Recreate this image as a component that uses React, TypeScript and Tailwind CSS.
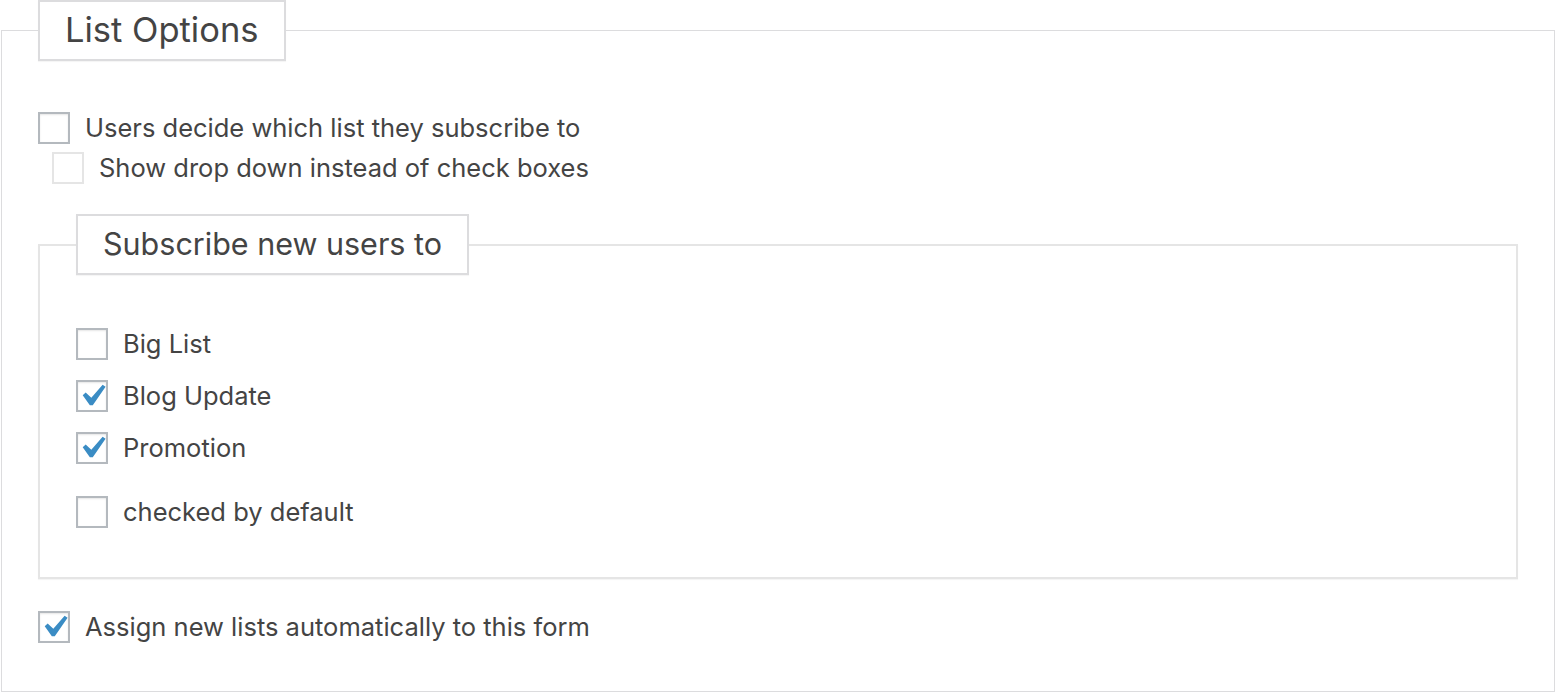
const font = "font-['Inter','Liberation_Sans',sans-serif]";

function Box({ checked = false, faint = false }: { checked?: boolean; faint?: boolean }) {
  return (
    <span
      className={
        'flex h-8 w-8 shrink-0 items-center justify-center bg-white border-2 ' +
        (faint
          ? 'border-[#e5e5e5]'
          : 'border-[#b4b9be] shadow-[inset_0_1px_2px_rgba(0,0,0,0.1)]')
      }
    >
      {checked && (
        <svg viewBox="0 0 20 20" className="h-[44px] w-[44px] shrink-0 fill-[#3a8cc4]">
          <path d="M14.83 4.89l1.34.94-5.81 8.38H9.02L5.78 9.67l1.34-1.25 2.57 2.4z" />
        </svg>
      )}
    </span>
  );
}

function Row({
  label,
  checked,
  faint,
  className = '',
}: {
  label: string;
  checked?: boolean;
  faint?: boolean;
  className?: string;
}) {
  return (
    <label className={'flex items-center gap-[15px] ' + className}>
      <Box checked={checked} faint={faint} />
      <span className="text-[25.5px] leading-8 text-[#444]">{label}</span>
    </label>
  );
}

export default function App() {
  return (
    <div className={'h-[694px] w-[1556px] bg-white px-px ' + font}>
      <fieldset className="h-[692px] border border-[#dcdcde] px-9">
        <legend className="h-[61px] border-2 border-[#dcdcde] bg-white px-[25px] text-[34.5px] leading-[56px] text-[#444] shadow-[0_1px_1px_rgba(0,0,0,0.04)]">
          List Options
        </legend>

        <Row label="Users decide which list they subscribe to" className="mt-[51px]" />
        <Row label="Show drop down instead of check boxes" faint className="ml-[14px] mt-2" />

        <fieldset className="mt-[30px] border-2 border-[#e5e5e5] px-9 pb-[49px] shadow-[0_1px_1px_rgba(0,0,0,0.04)]">
          <legend className="h-[61px] border-2 border-[#dcdcde] bg-white px-[25px] text-[30.5px] leading-[56px] text-[#444] shadow-[0_1px_1px_rgba(0,0,0,0.04)]">
            Subscribe new users to
          </legend>
          <div className="mt-[53px] flex flex-col gap-5">
            <Row label="Big List" />
            <Row label="Blog Update" checked />
            <Row label="Promotion" checked />
            <Row label="checked by default" className="mt-3" />
          </div>
        </fieldset>

        <Row label="Assign new lists automatically to this form" checked className="mt-8" />
      </fieldset>
    </div>
  );
}
